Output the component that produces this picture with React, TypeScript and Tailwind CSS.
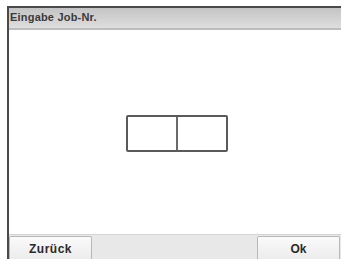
export default function App() {
  return (
    <div className="w-[342px] h-[259px] bg-white overflow-hidden pt-[6px] pl-[7px] pr-[1px]" style={{ fontFamily: '"Liberation Sans", Arial, sans-serif' }}>
      <div className="h-full flex flex-col border-l-2 border-t-2 border-[#4a4a4a]">
        {/* title bar */}
        <div className="h-[22px] flex items-center px-[1px] pb-[1px] bg-gradient-to-b from-[#c4c4c4] to-[#dedede] border-b-2 border-[#bdbdbd]">
          <span className="text-[11px] font-bold text-[#3a3a3a] tracking-[0.2px]">Eingabe Job-Nr.</span>
        </div>

        {/* content */}
        <div className="flex-1 flex items-center justify-center bg-white pt-[3px]">
          <div className="flex w-[102px] h-[37px] border-2 border-[#5a5a5a] rounded-[2px] ml-[4px]">
            <div className="flex-1 border-r-2 border-[#6a6a6a]" />
            <div className="flex-1" />
          </div>
        </div>

        {/* bottom bar */}
        <div className="h-[25px] bg-[#e8e8e8] border-t border-[#d4d4d4] flex items-end justify-between pl-[0px] pr-[1px]">
          <button className="w-[83px] h-[23px] bg-gradient-to-b from-[#fafafa] to-[#ececec] border border-[#b8b8b8] border-b-0 rounded-t-[2px] text-[12px] font-bold text-[#2a2a2a] pt-[2px] tracking-[0.5px]">
            Zurück
          </button>
          <button className="w-[83px] h-[23px] bg-gradient-to-b from-[#fafafa] to-[#ececec] border border-[#b8b8b8] border-b-0 rounded-t-[2px] text-[12px] font-bold text-[#2a2a2a] pt-[2px]">
            Ok
          </button>
        </div>
      </div>
    </div>
  );
}
